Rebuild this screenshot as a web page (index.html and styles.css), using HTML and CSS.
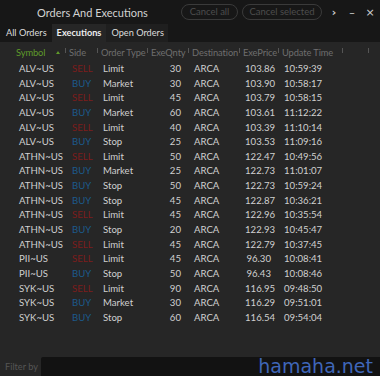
FILE: index.html
```html
<!DOCTYPE html>
<html>
<head>
<meta charset="utf-8">
<link rel="stylesheet" href="styles.css">
</head>
<body>
<div class="app">
  <header class="titlebar">
    <h1 class="title">Orders And Executions</h1>
    <div class="actions">
      <span class="pill pill-all">Cancel all</span>
      <span class="pill pill-sel">Cancel selected</span>
    </div>
    <div class="winctl">
      <span class="wc chev">&#x203A;</span>
      <span class="wc">&#x2013;</span>
      <span class="wc">&#x00D7;</span>
    </div>
  </header>
  <nav class="tabs">
    <span class="tab">All Orders</span>
    <span class="tab active">Executions</span>
    <span class="tab alt">Open Orders</span>
  </nav>
  <div class="grid">
    <div class="row head">
      <span class="c sym sorted">Symbol<i class="tri"></i></span>
      <span class="c sep">Side</span>
      <span class="c sep">Order Type</span>
      <span class="c sep">ExeQnty</span>
      <span class="c sep">Destination</span>
      <span class="c sep">ExePrice</span>
      <span class="c sep">Update Time</span>
      <span class="c sep"></span>
      <span class="c sep"></span>
    </div>
    <div id="rows"></div>
  </div>
  <footer class="filter">
    <span class="flabel">Filter by</span>
    <span class="finput"></span>
  </footer>
  <div class="watermark">hamaha.net</div>
</div>
<script>
var data = [
["ALV~US","SELL","Limit",30,"103.86","10:59:39"],
["ALV~US","BUY","Market",30,"103.90","10:58:17"],
["ALV~US","SELL","Limit",45,"103.79","10:58:15"],
["ALV~US","BUY","Market",60,"103.61","11:12:22"],
["ALV~US","SELL","Limit",40,"103.39","11:10:14"],
["ALV~US","BUY","Stop",25,"103.53","11:09:16"],
["ATHN~US","SELL","Limit",50,"122.47","10:49:56"],
["ATHN~US","BUY","Market",25,"122.73","11:01:07"],
["ATHN~US","BUY","Stop",50,"122.73","10:59:24"],
["ATHN~US","BUY","Stop",45,"122.87","10:36:21"],
["ATHN~US","SELL","Limit",45,"122.96","10:35:54"],
["ATHN~US","BUY","Stop",20,"122.93","10:45:47"],
["ATHN~US","SELL","Limit",45,"122.79","10:37:45"],
["PII~US","SELL","Limit",45,"96.30","10:08:41"],
["PII~US","BUY","Stop",50,"96.43","10:08:46"],
["SYK~US","SELL","Limit",90,"116.95","09:48:50"],
["SYK~US","BUY","Market",30,"116.29","09:51:01"],
["SYK~US","BUY","Stop",60,"116.54","09:54:04"]
];
var h = "";
data.forEach(function(r){
  h += '<div class="row">' +
    '<span class="c sym">'+r[0]+'</span>' +
    '<span class="c side '+r[1].toLowerCase()+'">'+r[1]+'</span>' +
    '<span class="c">'+r[2]+'</span>' +
    '<span class="c num">'+r[3]+'</span>' +
    '<span class="c dest">ARCA</span>' +
    '<span class="c num price">'+r[4]+'</span>' +
    '<span class="c time">'+r[5]+'</span>' +
    '<span class="c"></span><span class="c"></span></div>';
});
document.getElementById("rows").innerHTML = h;
</script>
</body>
</html>
```
FILE: styles.css
```css
html, body {
  margin: 0;
  padding: 0;
  background: #262626;
}
.app {
  position: relative;
  width: 380px;
  height: 376px;
  display: flex;
  flex-direction: column;
  background: #262626;
  font-family: Lato, "Noto Sans", sans-serif;
  overflow: hidden;
}
.titlebar {
  height: 24px;
  background: #171717;
  display: flex;
  align-items: center;
}
.title {
  margin: 0 0 0 37px;
  width: 140px;
  font-size: 11px;
  font-weight: 400;
  color: #d2d2d2;
  white-space: nowrap;
}
.actions {
  display: flex;
  gap: 4px;
  margin-left: 4px;
}
.pill {
  height: 14px;
  line-height: 14px;
  border: 1px solid #3a3a3a;
  border-radius: 8px;
  color: #4d4d4d;
  font-size: 9.5px;
  text-align: center;
  white-space: nowrap;
}
.pill-all { width: 55px; }
.pill-sel { width: 78px; }
.winctl {
  display: flex;
  margin-left: 3px;
}
.wc {
  width: 18px;
  text-align: center;
  color: #cfcfcf;
  font-size: 11px;
  font-family: "DejaVu Sans", sans-serif;
}
.chev { font-weight: 700; }
.tabs {
  height: 18px;
  background: #171717;
  display: flex;
  padding-left: 1px;
}
.tab {
  padding: 0 5px;
  line-height: 18px;
  font-size: 9.2px;
  color: #dcdcdc;
  white-space: nowrap;
}
.tab.active {
  background: #262626;
  font-weight: 700;
  color: #ececec;
}
.tab.alt {
  background: #1f1f1f;
  padding-right: 4px;
}
.grid {
  display: flex;
  flex-direction: column;
  flex: 1;
  padding-top: 1px;
}
.row {
  display: grid;
  grid-template-columns: 65px 32px 50px 41px 51px 39px 64px 26px 12px;
  height: 14.65px;
  line-height: 14.65px;
  font-size: 9.6px;
  color: #d0d0d0;
  white-space: nowrap;
}
.row.head {
  height: 19px;
  line-height: 19px;
  font-size: 9.3px;
  color: #6e6e6e;
  letter-spacing: -0.1px;
}
.c { padding-left: 6px; overflow: hidden; }
.row.head .c { padding-left: 4px; }
.row.head .sym { padding-left: 16px; }
.row .sym { padding-left: 19px; }
.sep {
  background-image: linear-gradient(#555 50%, transparent 50%);
  background-repeat: no-repeat;
  background-position: 0 5px;
  background-size: 1px 9px;
}
.row.head .sorted { color: #5f9a2a; }
.tri {
  display: inline-block;
  width: 0;
  height: 0;
  margin-left: 11px;
  border-left: 2.5px solid transparent;
  border-right: 2.5px solid transparent;
  border-bottom: 3px solid #5f9a2a;
  vertical-align: 2px;
}
.side { padding-left: 7px; }
.sell { color: #7e1c1c; }
.buy { color: #1c5a8c; }
.num { text-align: right; padding-right: 7px; }
.filter {
  height: 21px;
  display: flex;
  align-items: flex-end;
}
.flabel {
  width: 41px;
  padding-left: 5px;
  box-sizing: border-box;
  font-size: 9.2px;
  line-height: 18px;
  color: #555;
  white-space: nowrap;
}
.finput {
  flex: 1;
  height: 19px;
  background: #121212;
  border-radius: 2px 0 0 0;
}
.watermark {
  position: absolute;
  right: 7px;
  bottom: 0;
  font-family: "DejaVu Sans", sans-serif;
  font-size: 19px;
  line-height: 20px;
  color: #3f66b8;
}
```
